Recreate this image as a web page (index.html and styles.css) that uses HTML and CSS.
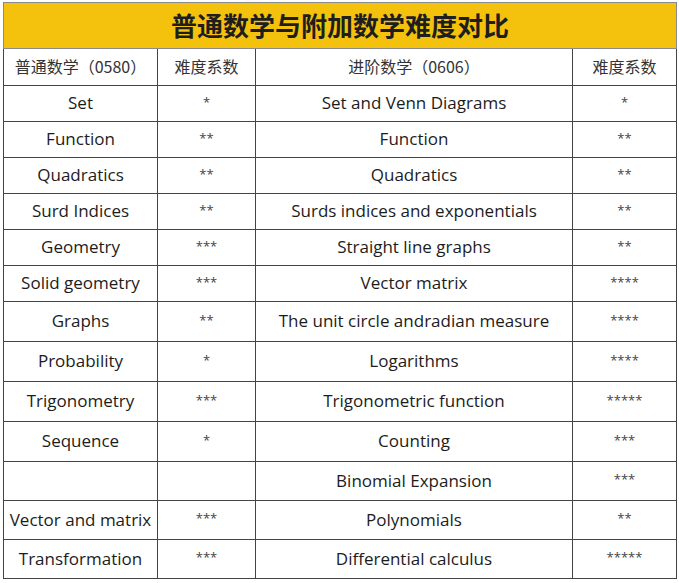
FILE: index.html
```html
<!DOCTYPE html>
<html lang="zh">
<head>
<meta charset="utf-8">
<title>普通数学与附加数学难度对比</title>
<link rel="stylesheet" href="styles.css">
</head>
<body>
<table class="cmp">
  <colgroup>
    <col class="c1"><col class="c2"><col class="c3"><col class="c4">
  </colgroup>
  <thead>
    <tr class="title-row"><th colspan="4" class="title">普通数学与附加数学难度对比</th></tr>
    <tr class="head-row">
      <th class="hd">普通数学（0580）</th>
      <th class="hd">难度系数</th>
      <th class="hd">进阶数学（0606）</th>
      <th class="hd">难度系数</th>
    </tr>
  </thead>
  <tbody>
    <tr class="r-s"><td>Set</td><td class="st">*</td><td>Set and Venn Diagrams</td><td class="st">*</td></tr>
    <tr class="r-s"><td>Function</td><td class="st">**</td><td>Function</td><td class="st">**</td></tr>
    <tr class="r-s"><td>Quadratics</td><td class="st">**</td><td>Quadratics</td><td class="st">**</td></tr>
    <tr class="r-s"><td>Surd Indices</td><td class="st">**</td><td>Surds indices and exponentials</td><td class="st">**</td></tr>
    <tr class="r-s"><td>Geometry</td><td class="st">***</td><td>Straight line graphs</td><td class="st">**</td></tr>
    <tr class="r-s"><td>Solid geometry</td><td class="st">***</td><td>Vector matrix</td><td class="st">****</td></tr>
    <tr class="r-l"><td>Graphs</td><td class="st">**</td><td>The unit circle andradian measure</td><td class="st">****</td></tr>
    <tr class="r-l"><td>Probability</td><td class="st">*</td><td>Logarithms</td><td class="st">****</td></tr>
    <tr class="r-l"><td>Trigonometry</td><td class="st">***</td><td>Trigonometric function</td><td class="st">*****</td></tr>
    <tr class="r-l"><td>Sequence</td><td class="st">*</td><td>Counting</td><td class="st">***</td></tr>
    <tr class="r-m"><td></td><td class="st"></td><td>Binomial Expansion</td><td class="st">***</td></tr>
    <tr class="r-m"><td>Vector and matrix</td><td class="st">***</td><td>Polynomials</td><td class="st">**</td></tr>
    <tr class="r-m"><td>Transformation</td><td class="st">***</td><td>Differential calculus</td><td class="st">*****</td></tr>
  </tbody>
</table>
</body>
</html>
```
FILE: styles.css
```css
html, body {
  margin: 0;
  padding: 0;
  background: #ffffff;
}

body {
  padding: 2px 0 0 3px;
  font-family: "Open Sans", "Noto Sans CJK SC", sans-serif;
  color: #1c1c1c;
}

.cmp {
  border-collapse: collapse;
  table-layout: fixed;
  width: 673px;
  border: 1px solid #6a6a6a;
}

.c1 { width: 154px; }
.c2 { width: 98px; }
.c3 { width: 317px; }
.c4 { width: 104px; }

.cmp th,
.cmp td {
  border: 1px solid #444444;
  padding: 0 0 2px 0;
  text-align: center;
  vertical-align: middle;
  font-size: 17px;
  font-weight: 400;
  white-space: nowrap;
}

.title-row { height: 46px; }

.cmp th.title {
  background: #f4c20d;
  border-color: #8a8a8a;
  font-family: "Noto Sans CJK SC", sans-serif;
  font-size: 26px;
  font-weight: 700;
  color: #1e1e1e;
  padding-bottom: 2px;
}

.head-row { height: 37px; }

.cmp th.hd {
  font-family: "Noto Sans CJK SC", sans-serif;
  font-size: 16px;
  color: #333333;
  font-weight: 400;
}

.r-s { height: 36px; }
.r-l { height: 40px; }
.r-m { height: 39px; }

.cmp td.st {
  font-size: 13px;
  color: #444444;
  padding-bottom: 4px;
}
```
